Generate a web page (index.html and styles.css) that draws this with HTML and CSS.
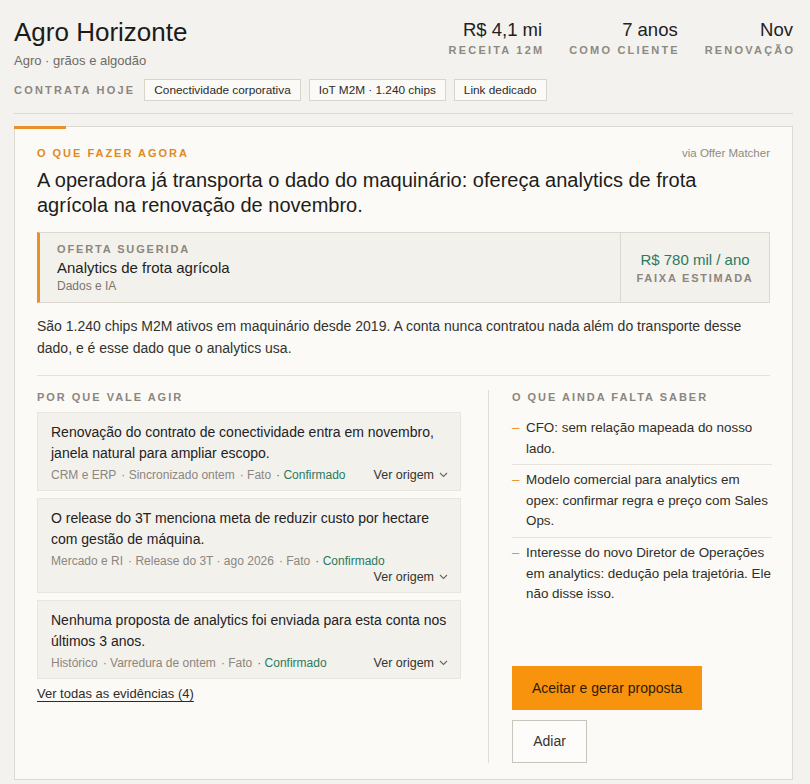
FILE: index.html
```html
<!DOCTYPE html>
<html lang="pt-BR">
<head>
<meta charset="utf-8">
<title>Agro Horizonte</title>
<link rel="stylesheet" href="styles.css">
</head>
<body>
<div class="page">
  <header class="account">
    <div class="account-top">
      <div class="account-id">
        <h1 class="account-name">Agro Horizonte</h1>
        <div class="account-sector">Agro · grãos e algodão</div>
      </div>
      <div class="stats">
        <div class="stat"><div class="stat-value">R$ 4,1 mi</div><div class="stat-label">Receita 12M</div></div>
        <div class="stat"><div class="stat-value">7 anos</div><div class="stat-label">Como cliente</div></div>
        <div class="stat"><div class="stat-value">Nov</div><div class="stat-label">Renovação</div></div>
      </div>
    </div>
    <div class="contracts">
      <span class="eyebrow">Contrata hoje</span>
      <span class="chip">Conectividade corporativa</span>
      <span class="chip">IoT M2M · 1.240 chips</span>
      <span class="chip">Link dedicado</span>
    </div>
  </header>

  <section class="card">
    <div class="card-head">
      <span class="kicker">O que fazer agora</span>
      <span class="source">via Offer Matcher</span>
    </div>
    <h2 class="headline">A operadora já transporta o dado do maquinário: ofereça analytics de frota agrícola na renovação de novembro.</h2>

    <div class="offer">
      <div class="offer-main">
        <div class="offer-label">Oferta sugerida</div>
        <div class="offer-name">Analytics de frota agrícola</div>
        <div class="offer-cat">Dados e IA</div>
      </div>
      <div class="offer-value">
        <div class="offer-amount">R$ 780 mil / ano</div>
        <div class="offer-range">Faixa estimada</div>
      </div>
    </div>

    <p class="summary">São 1.240 chips M2M ativos em maquinário desde 2019. A conta nunca contratou nada além do transporte desse dado, e é esse dado que o analytics usa.</p>

    <div class="columns">
      <div class="why">
        <div class="section-label">Por que vale agir</div>
        <div class="evidence-list">
          <article class="evidence">
            <div class="evidence-text">Renovação do contrato de conectividade entra em novembro, janela natural para ampliar escopo.</div>
            <div class="evidence-meta">
              <span class="meta-item">CRM e ERP</span>
              <span class="meta-item">Sincronizado ontem</span>
              <span class="meta-item">Fato</span>
              <span class="meta-item confirmed">Confirmado</span>
              <span class="origin">Ver origem <svg class="chev" width="9" height="6" viewBox="0 0 9 6"><polyline points="1,1 4.5,4.5 8,1" fill="none" stroke="#6b6761" stroke-width="1.1"/></svg></span>
            </div>
          </article>
          <article class="evidence">
            <div class="evidence-text">O release do 3T menciona meta de reduzir custo por hectare com gestão de máquina.</div>
            <div class="evidence-meta">
              <span class="meta-item">Mercado e RI</span>
              <span class="meta-item">Release do 3T · ago 2026</span>
              <span class="meta-item">Fato</span>
              <span class="meta-item confirmed">Confirmado</span>
              <span class="origin">Ver origem <svg class="chev" width="9" height="6" viewBox="0 0 9 6"><polyline points="1,1 4.5,4.5 8,1" fill="none" stroke="#6b6761" stroke-width="1.1"/></svg></span>
            </div>
          </article>
          <article class="evidence">
            <div class="evidence-text">Nenhuma proposta de analytics foi enviada para esta conta nos últimos 3 anos.</div>
            <div class="evidence-meta">
              <span class="meta-item">Histórico</span>
              <span class="meta-item">Varredura de ontem</span>
              <span class="meta-item">Fato</span>
              <span class="meta-item confirmed">Confirmado</span>
              <span class="origin">Ver origem <svg class="chev" width="9" height="6" viewBox="0 0 9 6"><polyline points="1,1 4.5,4.5 8,1" fill="none" stroke="#6b6761" stroke-width="1.1"/></svg></span>
            </div>
          </article>
        </div>
        <a class="all-link" href="#">Ver todas as evidências (4)</a>
      </div>

      <div class="open">
        <div class="section-label">O que ainda falta saber</div>
        <ul class="open-list">
          <li class="open-item"><span class="dash">–</span><span>CFO: sem relação mapeada do nosso lado.</span></li>
          <li class="open-item"><span class="dash">–</span><span>Modelo comercial para analytics em opex: confirmar regra e preço com Sales Ops.</span></li>
          <li class="open-item"><span class="dash">–</span><span>Interesse do novo Diretor de Operações em analytics: dedução pela trajetória. Ele não disse isso.</span></li>
        </ul>
        <div class="actions">
          <button class="btn-primary" type="button">Aceitar e gerar proposta</button>
          <button class="btn-secondary" type="button">Adiar</button>
        </div>
      </div>
    </div>
  </section>
</div>
</body>
</html>
```

FILE: styles.css
```css
* { box-sizing: border-box; }

body {
  margin: 0;
  background: #f4f2ee;
  font-family: "Liberation Sans", Arial, sans-serif;
  color: #1f1e1c;
}

.page {
  padding: 16px 17px 0 14px;
}

/* Header */
.account-top {
  display: flex;
  justify-content: space-between;
  align-items: flex-start;
}

.account-name {
  margin: 0;
  font-size: 26px;
  font-weight: 400;
  line-height: 33px;
  color: #1c1b19;
}

.account-sector {
  margin-top: 3px;
  font-size: 13px;
  line-height: 18px;
  color: #6f6a63;
}

.stats {
  display: flex;
  gap: 27px;
  margin-top: 3px;
}

.stat {
  text-align: right;
}

.stat-value {
  font-size: 18.5px;
  line-height: 22px;
  color: #22211f;
}

.stat-label {
  margin-top: 2px;
  margin-right: -0.2em;
  font-size: 11px;
  line-height: 14px;
  letter-spacing: 0.2em;
  text-transform: uppercase;
  font-weight: 600;
  color: #8e8982;
}

.contracts {
  display: flex;
  align-items: center;
  gap: 8px;
  margin-top: 9px;
  padding-bottom: 12px;
  border-bottom: 1px solid #dcd8d0;
}

.eyebrow {
  margin-right: 1px;
  font-size: 11px;
  letter-spacing: 0.2em;
  font-weight: 600;
  text-transform: uppercase;
  color: #8b867f;
}

.chip {
  display: inline-flex;
  align-items: center;
  height: 22px;
  padding: 0 9px;
  border: 1px solid #d9d5cd;
  background: #fbfaf7;
  font-size: 11.8px;
  color: #2b2a27;
}

/* Card */
.card {
  position: relative;
  margin-top: 12px;
  background: #fbfaf6;
  border: 1px solid #dedad3;
  padding: 19px 22px 16px 22px;
}

.card::before {
  content: "";
  position: absolute;
  left: -1px;
  top: -1px;
  width: 52px;
  height: 3px;
  background: #e8902a;
}

.card-head {
  display: flex;
  justify-content: space-between;
  align-items: baseline;
}

.kicker {
  font-size: 11px;
  line-height: 14px;
  font-weight: 700;
  letter-spacing: 0.18em;
  text-transform: uppercase;
  color: #e08a1f;
}

.source {
  font-size: 11.5px;
  color: #8f8a83;
}

.headline {
  margin: 8px 0 0;
  font-size: 20px;
  line-height: 25px;
  font-weight: 400;
  color: #1e1d1b;
}

.offer {
  display: flex;
  margin-top: 14px;
  border: 1px solid #dcd8d0;
  border-left: 3px solid #e8902a;
  background: #f3f1ec;
}

.offer-main {
  flex: 1;
  padding: 9px 17px 8px;
}

.offer-label {
  font-size: 11px;
  line-height: 14px;
  letter-spacing: 0.17em;
  font-weight: 600;
  text-transform: uppercase;
  color: #8b867f;
}

.offer-name {
  margin-top: 2px;
  font-size: 15px;
  line-height: 20px;
  color: #1f1e1c;
}

.offer-cat {
  font-size: 12px;
  line-height: 16px;
  color: #7a756e;
}

.offer-value {
  width: 149px;
  border-left: 1px solid #dcd8d0;
  display: flex;
  flex-direction: column;
  align-items: center;
  justify-content: center;
}

.offer-amount {
  font-size: 15px;
  line-height: 18px;
  color: #2b7a5f;
}

.offer-range {
  margin-top: 2px;
  font-size: 11px;
  line-height: 14px;
  letter-spacing: 0.16em;
  font-weight: 600;
  text-transform: uppercase;
  color: #8b867f;
}

.summary {
  margin: 12px 0 0;
  padding-bottom: 16px;
  border-bottom: 1px solid #e4e1da;
  font-size: 14px;
  line-height: 22px;
  color: #34322e;
}

/* Columns */
.columns {
  display: grid;
  grid-template-columns: 424px 1fr;
  column-gap: 27px;
  margin-top: 14px;
}

.section-label {
  font-size: 11px;
  line-height: 14px;
  letter-spacing: 0.18em;
  font-weight: 600;
  text-transform: uppercase;
  color: #8b867f;
}

.evidence-list {
  display: flex;
  flex-direction: column;
  gap: 7px;
  margin-top: 8px;
}

.evidence {
  background: #f3f1ec;
  border: 1px solid #e9e6df;
  padding: 9px 12px 7px 13px;
}

.evidence-text {
  font-size: 14px;
  line-height: 21px;
  color: #23221f;
}

.evidence-meta {
  display: flex;
  flex-wrap: wrap;
  align-items: center;
  margin-top: 3px;
  font-size: 12px;
  line-height: 16px;
  color: #8b867f;
}

.meta-item {
  margin-right: 5px;
}

.meta-item + .meta-item::before {
  content: "· ";
}

.confirmed {
  color: #2b7a5f;
}

.origin {
  display: inline-flex;
  align-items: center;
  gap: 5px;
  margin-left: auto;
  font-size: 12.5px;
  color: #35332f;
}

.all-link {
  display: inline-block;
  margin-top: 7px;
  font-size: 13px;
  line-height: 16px;
  color: #2e2c29;
  text-decoration: underline;
  text-underline-offset: 3px;
}

.open {
  display: flex;
  flex-direction: column;
  border-left: 1px solid #e1ded7;
  padding-left: 23px;
  margin-right: -2px;
}

.open-list {
  list-style: none;
  margin: 9px 0 0;
  padding: 0;
}

.open-item {
  display: flex;
  padding: 5px 0;
  border-bottom: 1px solid #e6e3dc;
  font-size: 13.4px;
  line-height: 20.6px;
  color: #302e2a;
}

.open-item:last-child {
  border-bottom: none;
}

.dash {
  flex: none;
  width: 14px;
  color: #e8902a;
}

.actions {
  display: flex;
  flex-direction: column;
  align-items: flex-start;
  gap: 10px;
  margin-top: 56px;
}

.btn-primary {
  height: 44px;
  padding: 0 20px;
  border: none;
  background: #f7930c;
  font-family: inherit;
  font-size: 14px;
  color: #2c1c05;
  cursor: pointer;
}

.btn-secondary {
  height: 43px;
  width: 75px;
  border: 1px solid #c9c5bd;
  background: #fdfcfa;
  font-family: inherit;
  font-size: 14px;
  color: #35332f;
  cursor: pointer;
}
```
